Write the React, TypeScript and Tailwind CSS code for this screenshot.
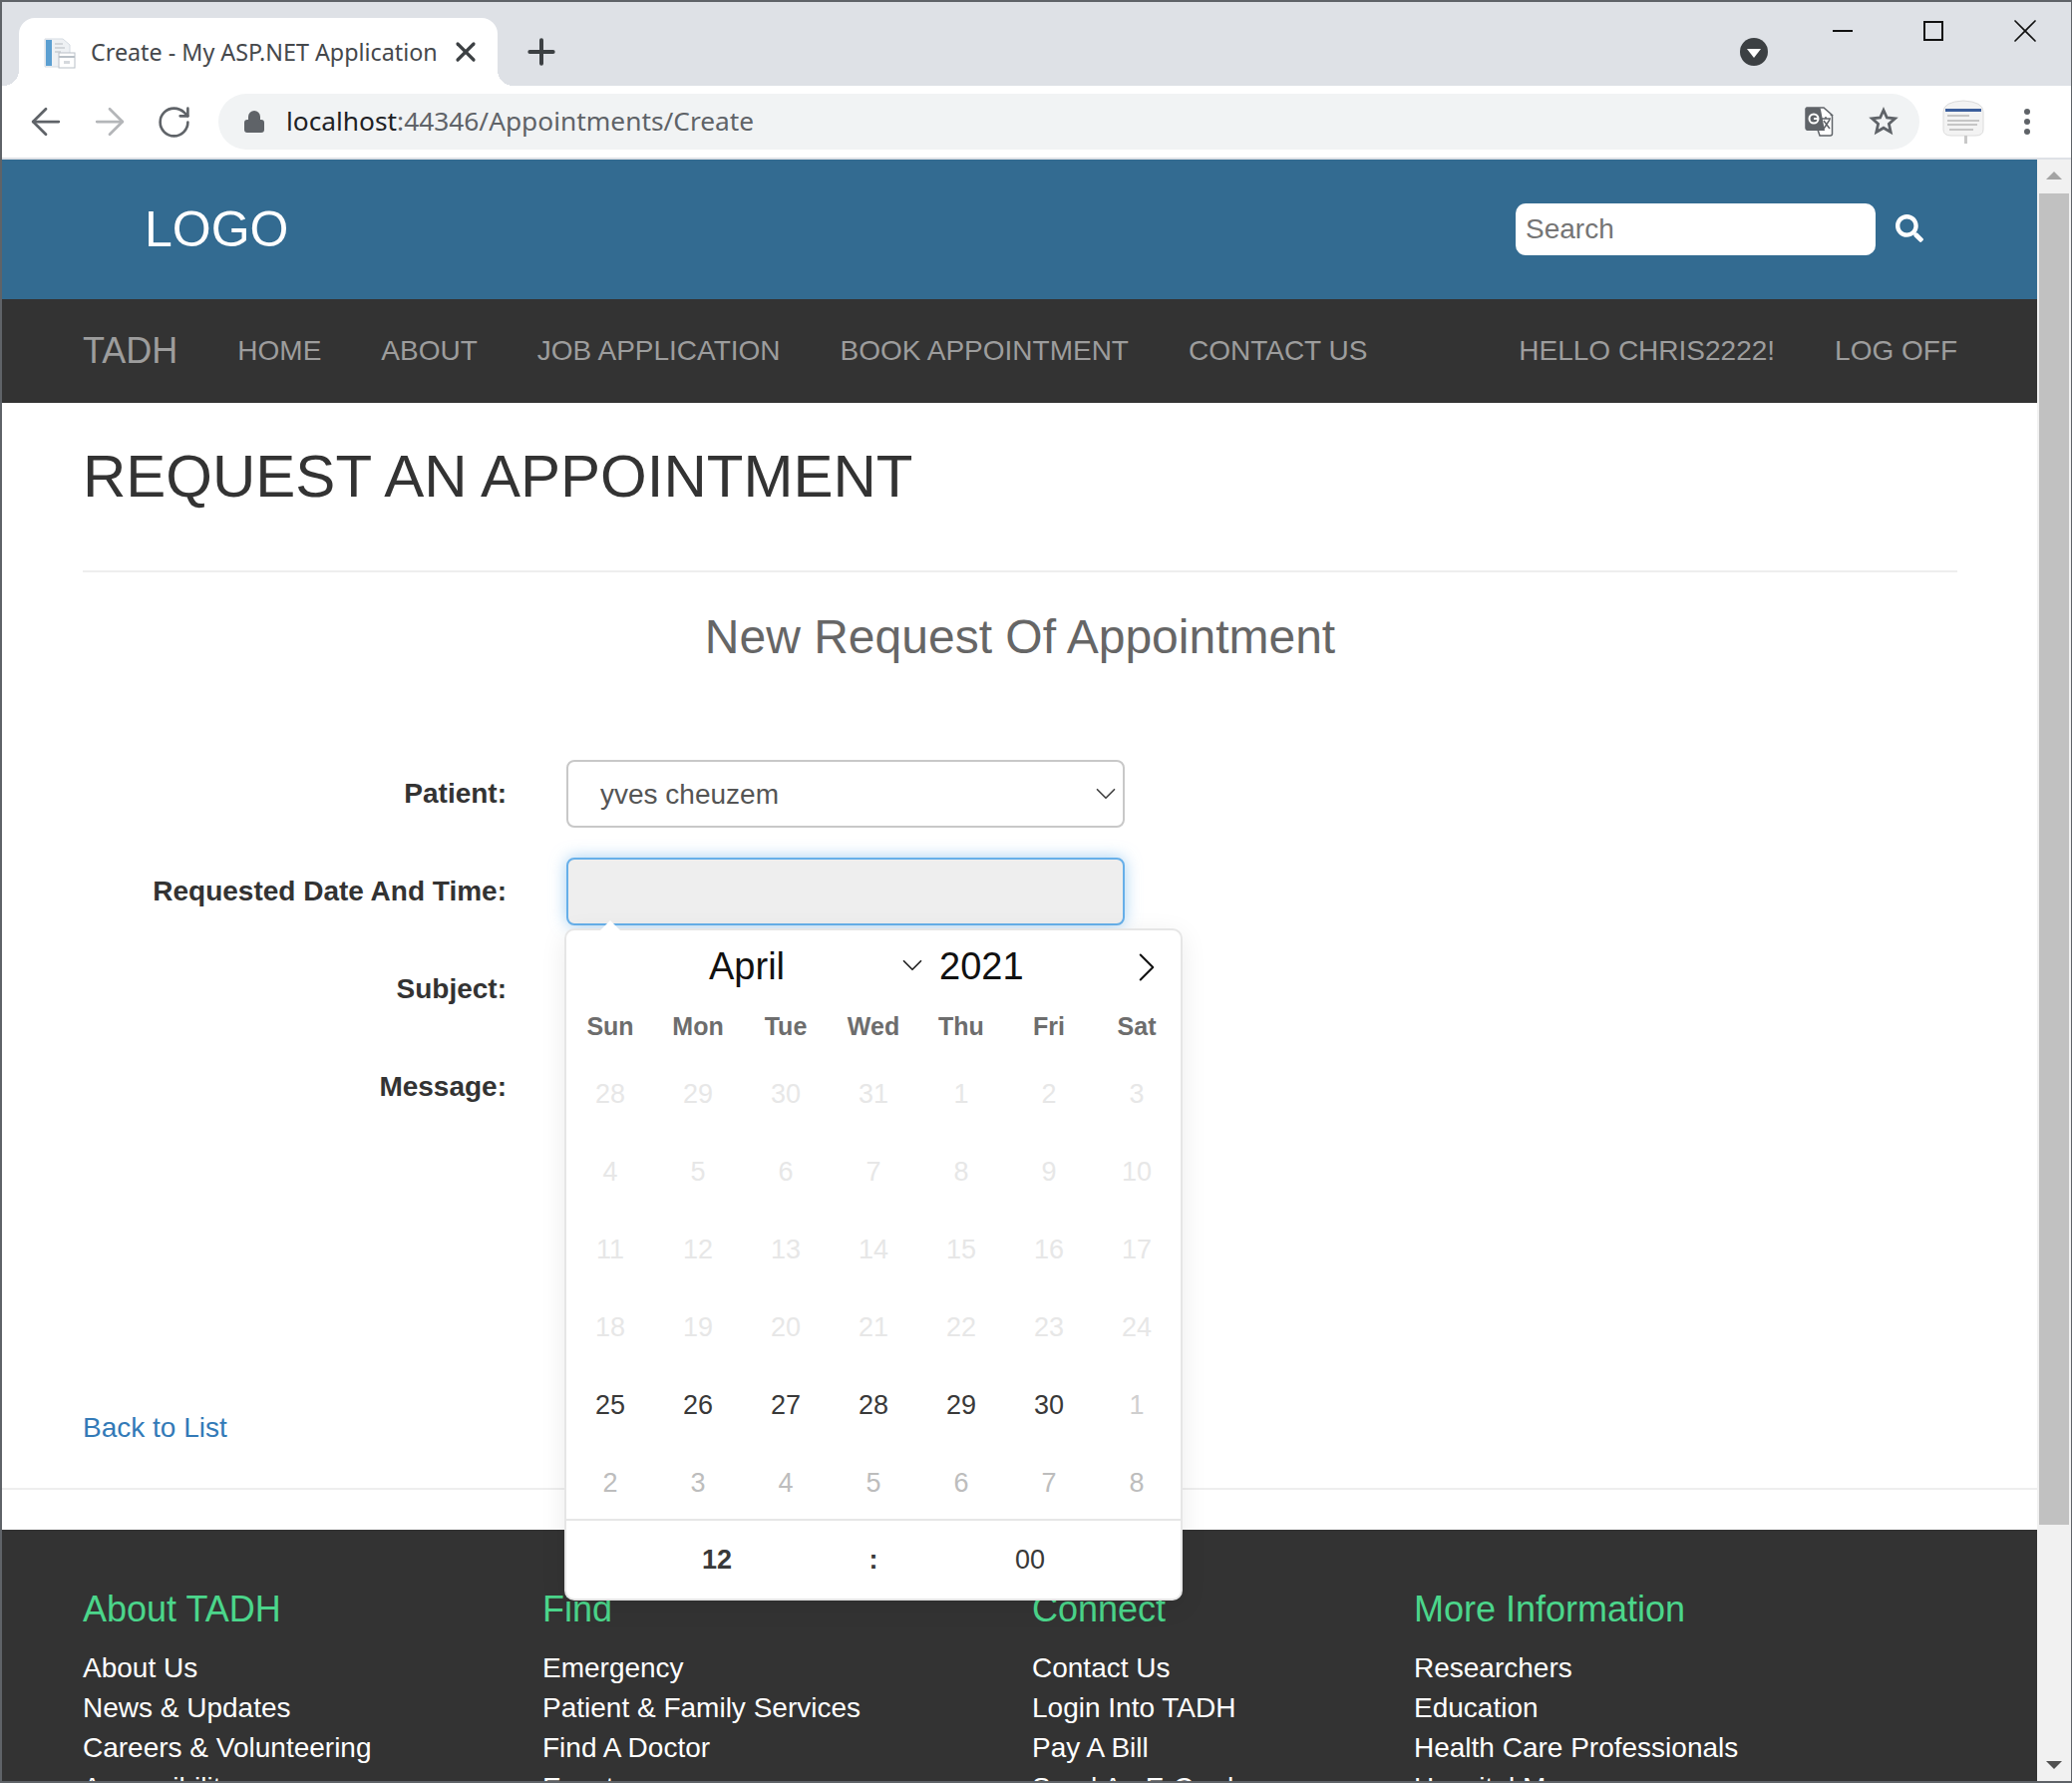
import { ArrowLeft, ArrowRight, ChevronDown, ChevronRight, Lock, Plus, RotateCw, X } from "lucide-react";
import { FaSearch } from "react-icons/fa";

const navLinks = ["HOME", "ABOUT", "JOB APPLICATION", "BOOK APPOINTMENT", "CONTACT US"];
const weekdays = ["Sun", "Mon", "Tue", "Wed", "Thu", "Fri", "Sat"];

const dayRows = [
  { days: [28, 29, 30, 31, 1, 2, 3], tone: "text-[#e7e7e7]" },
  { days: [4, 5, 6, 7, 8, 9, 10], tone: "text-[#e7e7e7]" },
  { days: [11, 12, 13, 14, 15, 16, 17], tone: "text-[#e7e7e7]" },
  { days: [18, 19, 20, 21, 22, 23, 24], tone: "text-[#e7e7e7]" },
  { days: [25, 26, 27, 28, 29, 30], tone: "text-[#393939]" },
  { days: [2, 3, 4, 5, 6, 7, 8], tone: "text-[#bdbdbd]" },
];

const footerColumns = [
  { title: "About TADH", width: "w-[461px]", links: ["About Us", "News & Updates", "Careers & Volunteering", "Accessibility"] },
  { title: "Find", width: "w-[491px]", links: ["Emergency", "Patient & Family Services", "Find A Doctor", "Events"] },
  { title: "Connect", width: "w-[383px]", links: ["Contact Us", "Login Into TADH", "Pay A Bill", "Send An E-Card"] },
  { title: "More Information", width: "w-[500px]", links: ["Researchers", "Education", "Health Care Professionals", "Hospital Map"] },
];

function PageIcon() {
  return (
    <svg width="34" height="34" viewBox="0 0 34 34">
      <path d="M2 4h18l7 6v22H2z" fill="#eef1f4" stroke="#d5dbe2" />
      <rect x="3" y="5" width="6" height="26" fill="#5b9fd1" />
      <path d="M12 9h8M12 13h10M12 17h6" stroke="#d2d6da" strokeWidth="2" />
      <rect x="16" y="18" width="16" height="15" fill="#fff" stroke="#b9c0c7" />
      <path d="M16 22h16" stroke="#b9c0c7" strokeWidth="2" />
      <rect x="21" y="26" width="6" height="3" fill="#d5d9dd" />
    </svg>
  );
}

function TranslateIcon() {
  return (
    <svg width="30" height="30" viewBox="0 0 30 30">
      <path d="M2 1h17l8 7h-1.500a2 2 0 0 1 2 2v17a2 2 0 0 1-2 2H15l-2-6H3a2 2 0 0 1-2-2V2z" fill="#fff" stroke="#5f6368" strokeWidth="1.500" />
      <path d="M1 3a2 2 0 0 1 2-2h11a2 2 0 0 1 2 2l4 21H3a2 2 0 0 1-2-2z" fill="#5f6368" />
      <circle cx="9" cy="12" r="4.500" fill="none" stroke="#fff" strokeWidth="2" />
      <path d="M9 12h5" stroke="#fff" strokeWidth="2" />
      <path d="M17 12h9M21 10v2M19 22l6-9M19 14l6 8" stroke="#5f6368" strokeWidth="1.500" fill="none" />
    </svg>
  );
}

function StarIcon() {
  return (
    <svg width="30" height="30" viewBox="0 0 30 30" className="shrink-0">
      <polygon
        points="15,3.500 18.400,11 26.500,11.800 20.400,17.300 22.200,25.500 15,21.200 7.800,25.500 9.600,17.300 3.500,11.800 11.600,11"
        fill="none"
        stroke="#5f6368"
        strokeWidth="2.800"
      />
    </svg>
  );
}

function ExtensionThumb() {
  return (
    <svg width="44" height="44" viewBox="0 0 44 44">
      <path d="M2 12Q2 2 22 1Q42 2 42 12V30Q42 36 34 36H10Q2 36 2 30z" fill="#f3f3f3" stroke="#dcdcdc" />
      <rect x="4" y="9" width="36" height="3" fill="#3c5f9c" />
      <path d="M6 16h22M6 21h32M6 25h30M8 30h24" stroke="#b8b8b8" strokeWidth="1.500" />
      <rect x="23" y="36" width="3" height="8" fill="#c8c8c8" />
    </svg>
  );
}

function ChromeBar() {
  return (
    <>
      <div className="flex h-[84px] shrink-0 bg-[#dee1e6]">
        <div className="relative ml-[17px] mt-4 flex h-[68px] w-[480px] items-center rounded-t-2xl bg-white pl-[24px] before:absolute before:bottom-0 before:-left-4 before:size-4 before:bg-[radial-gradient(circle_at_0_0,transparent_16px,white_16px)] after:absolute after:bottom-0 after:-right-4 after:size-4 after:bg-[radial-gradient(circle_at_100%_0,transparent_16px,white_16px)]">
          <PageIcon />
          <span className="ml-[14px] font-['Noto_Sans'] text-[23.300px] text-[#45484c]">Create - My ASP.NET Application</span>
          <X className="absolute right-[16px] top-[18px] text-[#3c4043]" size={32} strokeWidth={2.4} />
        </div>
        <Plus className="ml-[24px] mt-[30px] text-[#3c4043]" size={40} strokeWidth={2.4} />
        <div className="ml-[1182px] mt-[36px] flex size-[28px] items-center justify-center rounded-full bg-[#3c4043]">
          <div className="mt-0.5 border-x-[7px] border-t-[9px] border-x-transparent border-t-white" />
        </div>
        <div className="ml-[65px] mt-[28px] h-0.5 w-5 bg-[#111]" />
        <div className="ml-[71px] mt-[19px] size-[20px] border-2 border-[#111]" />
        <X className="ml-[62px] mt-[9px] text-[#111]" size={40} strokeWidth={1} />
      </div>
      <div className="flex h-[72px] shrink-0 items-center bg-white pl-[22px]">
        <ArrowLeft className="text-[#5f6368]" size={44} strokeWidth={1.5} />
        <ArrowRight className="ml-[20px] text-[#b4b6b9]" size={44} strokeWidth={1.5} />
        <RotateCw className="ml-[24px] text-[#5f6368]" size={37} strokeWidth={1.7} />
        <div className="ml-[26px] flex h-[56px] w-[1706px] items-center rounded-full bg-[#f1f3f4] pl-[24px] pr-[21px]">
          <Lock className="fill-[#5f6368] text-[#5f6368]" size={24} />
          <span className="ml-[20px] font-['Noto_Sans'] text-[26.300px] text-[#202124]">
            localhost<span className="text-[#5f6368]">:44346/Appointments/Create</span>
          </span>
          <div className="ml-auto shrink-0"><TranslateIcon /></div>
          <div className="ml-[34px] flex"><StarIcon /></div>
        </div>
        <div className="ml-[22px]"><ExtensionThumb /></div>
        <div className="ml-[39px] flex flex-col gap-1">
          <div className="size-[6px] rounded-full bg-[#5f6368]" />
          <div className="size-[6px] rounded-full bg-[#5f6368]" />
          <div className="size-[6px] rounded-full bg-[#5f6368]" />
        </div>
      </div>
      <div className="h-0.5 shrink-0 bg-[#dee1e6]" />
    </>
  );
}

function FormRow({ label, children }: { label: string; children: React.ReactNode }) {
  return (
    <div className="flex h-[68px] items-center">
      <label className="w-[425px] text-right text-[28px] font-bold text-[#333]">{label}</label>
      <div className="ml-[60px] w-[560px]">{children}</div>
    </div>
  );
}

function DatePicker() {
  return (
    <div className="absolute left-[564px] top-[929px] w-[620px] rounded-[10px] border-2 border-[#e6e6e6] bg-white shadow-[0_6px_26px_rgba(0,0,0,0.08)] before:absolute before:-top-[10px] before:left-[34px] before:border-x-[10px] before:border-b-[10px] before:border-x-transparent before:border-b-white">
      <div className="relative h-[70px]">
        <span className="absolute left-[143px] top-[8px] text-[38px] text-[#111]">April</span>
        <ChevronDown className="absolute left-[330px] top-[18px] text-[#222]" size={34} strokeWidth={1.2} />
        <span className="absolute left-[374px] top-[8px] text-[38px] text-[#111]">2021</span>
        <ChevronRight className="absolute left-[557px] top-[12px] text-[#111]" size={50} strokeWidth={1} />
      </div>
      <div className="mb-px grid h-[54px] grid-cols-7 items-center text-center text-[25px] font-bold text-[#6d6d6d]">
        {weekdays.map((day) => (
          <span key={day}>{day}</span>
        ))}
      </div>
      {dayRows.map((row, i) => (
        <div key={i} className={`grid h-[78px] grid-cols-7 items-center text-center text-[27px] ${row.tone}`}>
          {row.days.map((day) => (
            <span key={day}>{day}</span>
          ))}
          {i === 4 && <span className="text-[#cfcfcf]">1</span>}
        </div>
      ))}
      <div className="-mt-[3px] grid h-[80px] grid-cols-[300px_14px_300px] items-center justify-center border-t-2 border-[#e6e6e6] text-center text-[27px] text-[#393939]">
        <span className="font-bold">12</span>
        <span className="font-bold">:</span>
        <span>00</span>
      </div>
    </div>
  );
}

export default function App() {
  return (
    <div className="relative flex h-[1788px] w-[2078px] flex-col overflow-hidden border-x-2 border-y-2 border-r border-[#5f6368] font-['Liberation_Sans',sans-serif]">
      <ChromeBar />
      <div className="flex min-h-0 flex-1">
        <div className="w-[2041px] overflow-hidden">
          <div className="flex h-[140px] items-center justify-between bg-[#336b91] pl-[143px] pr-[114px]">
            <span className="text-[50px] text-white">LOGO</span>
            <div className="flex items-center">
              <div className="flex h-[52px] w-[361px] items-center rounded-[10px] bg-white pl-[10px] text-[28px] text-[#757575]">Search</div>
              <FaSearch className="ml-[20px] -mt-0.5 text-white" size={28} />
            </div>
          </div>
          <nav className="flex h-[104px] items-center bg-[#333] pl-[81px] pr-[80px] text-[28px] text-[#9d9d9d]">
            <span className="mr-[60px] text-[36px]">TADH</span>
            <div className="flex gap-[60px]">
              {navLinks.map((link) => (
                <a key={link}>{link}</a>
              ))}
            </div>
            <div className="ml-auto flex gap-[60px]">
              <a>HELLO CHRIS2222!</a>
              <a>LOG OFF</a>
            </div>
          </nav>
          <div className="h-[1130px] bg-white pl-[81px] pr-[80px]">
            <h2 className="pt-[41px] text-[60px] leading-[66px] text-[#333]">REQUEST AN APPOINTMENT</h2>
            <hr className="mt-[61px] border-t-2 border-[#eee]" />
            <h3 className="mt-[35px] text-center text-[48px] leading-[60px] text-[#666]">New Request Of Appointment</h3>
            <div className="mt-[93px] flex flex-col gap-[30px]">
              <FormRow label="Patient:">
                <div className="flex h-[68px] items-center justify-between rounded-lg border-2 border-[#c8c8c8] bg-white pl-[32px] text-[28px] text-[#555]">
                  <span className="mt-0.5">yves cheuzem</span>
                  <ChevronDown className="text-[#444]" size={34} strokeWidth={1.2} />
                </div>
              </FormRow>
              <FormRow label="Requested Date And Time:">
                <div className="h-[68px] rounded-lg border-2 border-[#66afe9] bg-[#eee] shadow-[0_0_16px_rgba(102,175,233,0.6)]" />
              </FormRow>
              <FormRow label="Subject:">
                <div className="h-[68px] rounded-lg border-2 border-[#ccc]" />
              </FormRow>
              <FormRow label="Message:">
                <div className="h-[240px] rounded-lg border-2 border-[#ccc]" />
              </FormRow>
            </div>
            <a className="mt-[288px] block text-[28px] leading-[40px] text-[#337ab7]">Back to List</a>
          </div>
          <hr className="-mt-[42px] border-t-2 border-[#eee]" />
          <footer className="mt-[40px] flex h-[260px] bg-[#333] pl-[81px] pt-[60px]">
            {footerColumns.map((column) => (
              <div key={column.title} className={column.width}>
                <div className="text-[36px] leading-[40px] text-[#4bd68b]">{column.title}</div>
                <ul className="mt-[19px] text-[28px] leading-[40px] text-white">
                  {column.links.map((link) => (
                    <li key={link}>{link}</li>
                  ))}
                </ul>
              </div>
            ))}
          </footer>
        </div>
        <div className="flex w-[34px] flex-col items-center bg-[#f1f1f1] py-[12px]">
          <div className="border-x-[8px] border-b-[8px] border-x-transparent border-b-[#a3a3a3]" />
          <div className="mt-[14px] h-[1335px] w-[30px] bg-[#c1c1c1]" />
          <div className="mt-auto border-x-[8px] border-t-[8px] border-x-transparent border-t-[#505050]" />
        </div>
      </div>
      <DatePicker />
    </div>
  );
}
